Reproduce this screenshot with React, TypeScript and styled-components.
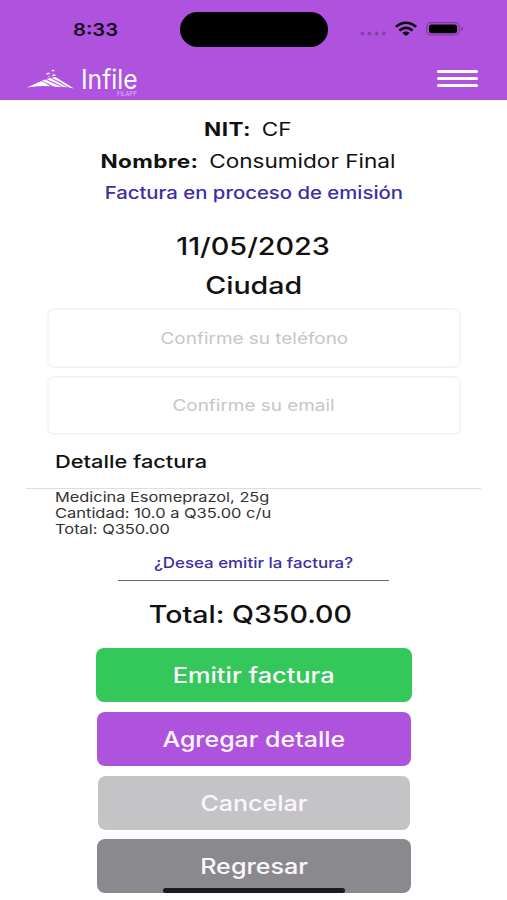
import React from "react";
import styled, { createGlobalStyle } from "styled-components";

const GlobalStyle = createGlobalStyle`
  * { box-sizing: border-box; }
  body {
    margin: 0;
    background: #fff;
    color: #111;
    font-family: Inter, "Liberation Sans", sans-serif;
  }
`;

const Screen = styled.main`
  position: relative;
  display: flex;
  flex-direction: column;
  width: 507px;
  height: 900px;
  overflow: hidden;
  background: #fff;
`;

const Header = styled.header`
  flex: none;
  height: 100px;
  background: #af52de;
`;

const StatusBar = styled.div`
  display: grid;
  grid-template-columns: 180px 148px 1fr;
  align-items: center;
  height: 59px;
`;

const Clock = styled.div`
  padding-left: 12px;
  color: #170a1e;
  text-align: center;
`;

const Island = styled.div`
  height: 35px;
  border-radius: 18px;
  background: #000;
`;

const StatusIcons = styled.div`
  display: flex;
  align-items: center;
  padding-left: 32px;

  svg { display: block; }
`;

const NavBar = styled.div`
  display: flex;
  justify-content: space-between;
  height: 41px;
  padding: 7px 29px 0 26px;
`;

const Brand = styled.div`
  display: flex;
  color: #fff;
`;

const BrandName = styled.div`
  display: flex;
  flex-direction: column;
  width: 62px;
  margin-left: 6px;
`;

const Wordmark = styled.span`
  font-size: 26.5px;
  font-weight: 400;
  line-height: 27px;
  white-space: nowrap;
  transform: scaleX(0.93);
  transform-origin: left center;
`;

const Tagline = styled.span`
  margin: -1px 0 0 36px;
  font-size: 5.5px;
  line-height: 5px;
  letter-spacing: 0.2px;
  opacity: 0.6;
`;

const MenuButton = styled.button`
  display: flex;
  flex-direction: column;
  gap: 4px;
  width: 41px;
  height: 24px;
  padding: 3.5px 0 0;
  border: 0;
  background: none;
`;

const MenuLine = styled.span`
  width: 41px;
  height: 3px;
  border-radius: 2px;
  background: #fff;
`;

/* One line of wide type: the face is stretched horizontally by $stretch. */
const WideText = styled.span<{
  $size: number;
  $stretch: number;
  $weight?: number;
  $color?: string;
  $align?: "left" | "center";
}>`
  display: inline-block;
  font-size: ${(p) => p.$size}px;
  font-weight: ${(p) => p.$weight ?? 500};
  color: ${(p) => p.$color ?? "inherit"};
  white-space: nowrap;
  transform: scaleX(${(p) => p.$stretch});
  transform-origin: ${(p) => p.$align ?? "center"} center;
`;

const Line = styled.div<{ $height: number }>`
  display: flex;
  flex: none;
  align-items: center;
  justify-content: center;
  height: ${(p) => p.$height}px;
`;

const Customer = styled.section`
  padding-top: 12px;
`;

const Field = styled(Line)`
  padding-right: 11px;
`;

const Label = styled.b`
  margin-right: 8.8px;
  font-weight: 700;
  letter-spacing: 0.3px;
`;

const Issue = styled.section`
  padding: 18px 0 4px;
`;

const Form = styled.form`
  display: flex;
  flex-direction: column;
  gap: 8px;
  padding: 0 46px 0 47px;
`;

const InputBox = styled.label`
  display: flex;
  align-items: center;
  justify-content: center;
  height: 59.5px;
  border: 2px solid #f5f5f5;
  border-radius: 7px;
`;

const DetailTitle = styled.div`
  display: flex;
  align-items: center;
  height: 54px;
  margin: 0 26px;
  padding: 0 0 1px 29px;
  border-bottom: 1px solid #dedede;
`;

const DetailList = styled.ul`
  display: flex;
  flex-direction: column;
  margin: -1.5px 0 0;
  padding: 0 0 0 55px;
  list-style: none;
`;

const DetailItem = styled.li`
  height: 16.4px;
  line-height: 16.4px;
`;

const Question = styled.div`
  display: flex;
  align-items: center;
  justify-content: center;
  width: 271px;
  height: 36px;
  margin: 8.3px auto 0;
  border-bottom: 1.5px solid #666;
`;

const Total = styled(Line)`
  padding-right: 7px;
`;

const Actions = styled.div`
  display: flex;
  flex-direction: column;
  align-items: center;
  gap: 9.8px;
  padding-left: 1px;
`;

const ActionButton = styled.button<{ $bg: string; $width: number }>`
  display: flex;
  align-items: center;
  justify-content: center;
  width: ${(p) => p.$width}px;
  height: 54px;
  padding: 0;
  border: 0;
  border-radius: 8px;
  background: ${(p) => p.$bg};
  color: #fbf6fd;
  font-family: inherit;
`;

const HomeIndicator = styled.div`
  position: absolute;
  bottom: 7.5px;
  left: 163px;
  width: 182px;
  height: 5px;
  border-radius: 3px;
  background: #1b1b1d;
`;

const LINK = "#3b2fa3";

const details = [
  { text: "Medicina Esomeprazol, 25g", stretch: 1.23 },
  { text: "Cantidad: 10.0 a Q35.00 c/u", stretch: 1.238 },
  { text: "Total: Q350.00", stretch: 1.235 },
];

const actions = [
  { text: "Emitir factura", bg: "#34c759", width: 316, stretch: 1.18 },
  { text: "Agregar detalle", bg: "#af52de", width: 314, stretch: 1.16 },
  { text: "Cancelar", bg: "#c4c4c6", width: 312, stretch: 1.165 },
  { text: "Regresar", bg: "#8a8a8e", width: 314, stretch: 1.17 },
];

function MountainLogo() {
  return (
    <svg width="49" height="24" viewBox="0 0 49 24" fill="#fff">
      <path d="M1 21.4 L14.8 15.2 L18.6 16.6 L24.5 20.2 Q12 19.2 1 21.4Z" />
      <path d="M15.6 14.4 L19.4 13.4 L36 21.2 L27.5 20.5 Q21 16.6 15.6 14.4Z" />
      <path d="M20.4 13 L24.4 12 L41.5 21.3 L37 21 Q29 16.4 20.4 13Z" />
      <path d="M25.4 11.7 L29.4 11.1 L48 22.4 L43 21.4 Q34.6 15.6 25.4 11.7Z" />
      <path d="M19.8 7.4 l3.2 -0.9 l1.2 1.4 l-3.2 0.9z" opacity=".85" />
      <path d="M25.6 9 l3.2 -0.8 l1.2 1.3 l-3.2 0.8z" opacity=".9" />
      <path d="M25.4 4.2 l2.4 -0.6 l0.9 1.3 l-2.4 0.6z" opacity=".9" />
      <path d="M21.8 10.5 l2 -0.5 l0.7 0.8 l-2 0.5z" opacity=".6" />
    </svg>
  );
}

function StatusGlyphs() {
  return (
    <svg width="106" height="24" viewBox="0 0 106 24">
      <g fill="#8540a9">
        <circle cx="2.3" cy="15.5" r="1.9" />
        <circle cx="9.5" cy="15.5" r="1.9" />
        <circle cx="16.7" cy="15.5" r="1.9" />
        <circle cx="23.8" cy="15.5" r="1.9" />
      </g>
      <g fill="none" stroke="#080409" strokeWidth="2.5">
        <path d="M35.8 8.8 Q46 0.6 56.2 8.8" />
        <path d="M39.4 12.5 Q46 7.2 52.6 12.5" />
      </g>
      <path d="M42.3 14.9 Q46 12.3 49.7 14.9 L46 17.9Z" fill="#080409" />
      <rect x="66.7" y="4.6" width="32.6" height="12.4" rx="4.2" fill="none" stroke="#7d3b9f" strokeWidth="1.2" />
      <rect x="68.9" y="6.5" width="28.2" height="8.8" rx="2.5" fill="#000" />
      <path d="M101 8.7 Q103 9.1 103 10.8 Q103 12.5 101 12.9Z" fill="#7d3b9f" />
    </svg>
  );
}

export default function App() {
  return (
    <>
      <GlobalStyle />
      <Screen>
        <Header>
          <StatusBar>
            <Clock>
              <WideText $size={17.5} $weight={600} $stretch={1.156}>8:33</WideText>
            </Clock>
            <Island />
            <StatusIcons>
              <StatusGlyphs />
            </StatusIcons>
          </StatusBar>
          <NavBar>
            <Brand>
              <MountainLogo />
              <BrandName>
                <Wordmark>Infile</Wordmark>
                <Tagline>FILAPP</Tagline>
              </BrandName>
            </Brand>
            <MenuButton aria-label="Menú">
              <MenuLine />
              <MenuLine />
              <MenuLine />
            </MenuButton>
          </NavBar>
        </Header>

        <Customer>
          <Field $height={33}>
            <WideText $size={18.5} $weight={400} $stretch={1.22}>
              <Label>NIT:</Label>CF
            </WideText>
          </Field>
          <Field $height={32}>
            <WideText $size={18.5} $weight={400} $stretch={1.22}>
              <Label>Nombre:</Label>Consumidor Final
            </WideText>
          </Field>
          <Line $height={32}>
            <WideText $size={17} $stretch={1.195} $color={LINK}>Factura en proceso de emisión</WideText>
          </Line>
        </Customer>

        <Issue>
          <Line $height={39}>
            <WideText $size={24} $stretch={1.2}>11/05/2023</WideText>
          </Line>
          <Line $height={38}>
            <WideText $size={24} $stretch={1.19}>Ciudad</WideText>
          </Line>
        </Issue>

        <Form>
          <InputBox>
            <WideText $size={16} $weight={400} $stretch={1.182} $color="#c6c6c8">Confirme su teléfono</WideText>
          </InputBox>
          <InputBox>
            <WideText $size={16} $weight={400} $stretch={1.182} $color="#c6c6c8">Confirme su email</WideText>
          </InputBox>
        </Form>

        <DetailTitle>
          <WideText $size={17.5} $stretch={1.245} $align="left">Detalle factura</WideText>
        </DetailTitle>
        <DetailList>
          {details.map((d) => (
            <DetailItem key={d.text}>
              <WideText $size={13.3} $weight={400} $stretch={d.stretch} $align="left" $color="#333">
                {d.text}
              </WideText>
            </DetailItem>
          ))}
        </DetailList>

        <Question>
          <WideText $size={14.5} $stretch={1.165} $color={LINK}>¿Desea emitir la factura?</WideText>
        </Question>
        <Total $height={67}>
          <WideText $size={24} $stretch={1.19}>Total: Q350.00</WideText>
        </Total>

        <Actions>
          {actions.map((a) => (
            <ActionButton key={a.text} $bg={a.bg} $width={a.width}>
              <WideText $size={21.5} $stretch={a.stretch}>{a.text}</WideText>
            </ActionButton>
          ))}
        </Actions>
        <HomeIndicator />
      </Screen>
    </>
  );
}
